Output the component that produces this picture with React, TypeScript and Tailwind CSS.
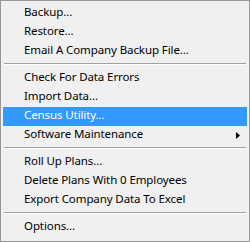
import { Fragment } from "react";

type Entry = { label: string; sub?: boolean; active?: boolean } | "sep";

const entries: Entry[] = [
  { label: "Backup..." },
  { label: "Restore..." },
  { label: "Email A Company Backup File..." },
  "sep",
  { label: "Check For Data Errors" },
  { label: "Import Data..." },
  { label: "Census Utility...", active: true },
  { label: "Software Maintenance", sub: true },
  "sep",
  { label: "Roll Up Plans..." },
  { label: "Delete Plans With 0 Employees" },
  { label: "Export Company Data To Excel" },
  "sep",
  { label: "Options..." },
];

function Separator() {
  return (
    <div className="h-[8px] pt-[2px] px-[1px]">
      <div className="h-px bg-[#a0a0a0]" />
      <div className="h-px bg-white" />
    </div>
  );
}

export default function App() {
  return (
    <div
      className="w-[250px] h-[242px] border border-[#979797] bg-[#f0f0f0] px-[2px] py-[3px] text-[11.5px] tracking-[-0.1px] text-black"
      style={{ fontFamily: '"Noto Sans", "Open Sans", sans-serif' }}
    >
      {entries.map((e, i) =>
        e === "sep" ? (
          <Separator key={i} />
        ) : (
          <Fragment key={i}>
            <div
              className={
                e.active
                  ? "h-[19px] flex items-center pl-[21px] pr-[7px] bg-[#3399ff] text-white"
                  : "h-[19px] flex items-center pl-[21px] pr-[7px]"
              }
            >
              <span className="flex-1 leading-none whitespace-nowrap pb-[3px]">{e.label}</span>
              {e.sub && (
                <svg width="4" height="7" viewBox="0 0 4 7" className="block">
                  <path d="M0 0 L4 3.5 L0 7 Z" fill="#000" />
                </svg>
              )}
            </div>
          </Fragment>
        )
      )}
    </div>
  );
}
